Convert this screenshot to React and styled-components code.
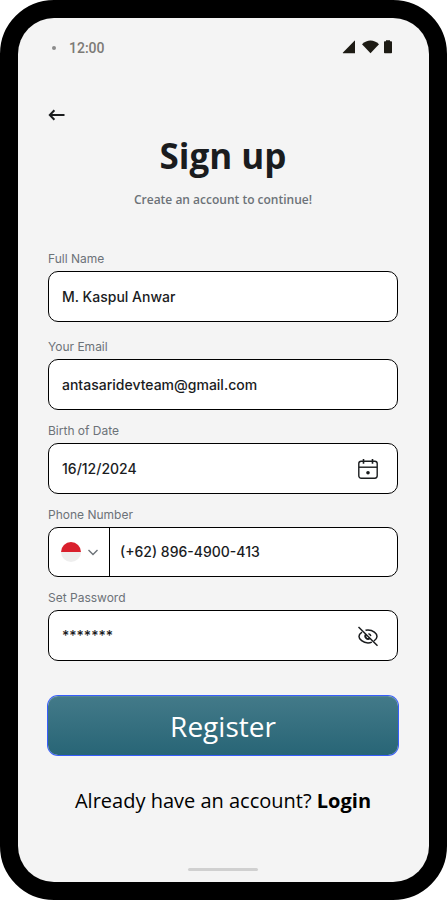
import React from "react";
import styled, { createGlobalStyle } from "styled-components";

const GlobalStyle = createGlobalStyle`
  *, *::before, *::after { box-sizing: border-box; }
  body {
    margin: 0;
    background: #fff;
    color: #1a1c1e;
    font-family: Inter, "Liberation Sans", sans-serif;
  }
  button, input, select { font: inherit; color: inherit; }
`;

const display = `"Open Sans", "Noto Sans", sans-serif`;

const Phone = styled.div`
  display: flex;
  flex-direction: column;
  min-height: 100vh;
  border: 18px solid #000;
  border-radius: 54px;
  background: #000;
`;

const Screen = styled.div`
  flex: 1;
  display: flex;
  flex-direction: column;
  padding: 0 31px 10px 30px;
  border-radius: 36px;
  background: #f4f4f4;
`;

const StatusBar = styled.header`
  display: flex;
  align-items: center;
  justify-content: space-between;
  height: 60px;
  padding: 0 6px 0 4px;
`;

const Clock = styled.div`
  display: flex;
  align-items: center;
  gap: 13px;
  color: #7c7a76;
  font: 500 14px/20px Roboto, sans-serif;

  &::before {
    content: "";
    width: 4px;
    height: 4px;
    border-radius: 50%;
    background: #8b8b8b;
  }
`;

const StatusIcons = styled.svg`
  display: block;
  margin-bottom: 3px;
`;

const Main = styled.main`
  display: flex;
  flex-direction: column;
  padding-top: 25px;
`;

const BackButton = styled.button`
  align-self: flex-start;
  display: flex;
  padding: 0;
  border: 0;
  background: none;
  cursor: pointer;
`;

const Title = styled.h1`
  margin: 5px 0 0;
  font: 700 35px/48px ${display};
  text-align: center;
`;

const Subtitle = styled.p`
  margin: 10px 0 0;
  color: #6c7278;
  font: 600 12px/20px ${display};
  text-align: center;
`;

const Form = styled.form`
  display: flex;
  flex-direction: column;
  gap: 11px;
  margin-top: 39px;
`;

const FieldGroup = styled.div`
  display: flex;
  flex-direction: column;
  gap: 2px;
  padding-bottom: ${(p) => (p.$spaced ? "4px" : "0")};
`;

const Label = styled.label`
  color: #6c7278;
  font-size: 12px;
  line-height: 20px;
`;

const Control = styled.div`
  display: flex;
  align-items: center;
  height: ${(p) => (p.$split ? "50px" : "51px")};
  padding: ${(p) => (p.$split ? "0" : "0 17px 0 13px")};
  border: 1px solid #000;
  border-radius: 10px;
  background: #fff;
`;

const TextInput = styled.input`
  flex: 1;
  min-width: 0;
  height: 100%;
  padding: 0 0 1px;
  border: 0;
  outline: 0;
  background: transparent;
  font-size: 14px;
  font-weight: 500;
`;

const IconButton = styled.button`
  display: flex;
  padding: 0;
  border: 0;
  background: none;
  cursor: pointer;
`;

const CountryPicker = styled.div`
  position: relative;
  display: flex;
  align-items: center;
  gap: 6px;
  width: 61px;
  height: 100%;
  margin-right: 10px;
  padding-left: 12px;
  border-right: 1px solid #000;
`;

const CountrySelect = styled.select`
  position: absolute;
  inset: 0;
  width: 100%;
  border: 0;
  opacity: 0;
  cursor: pointer;
`;

const Flag = styled.span`
  width: 20px;
  height: 20px;
  border-radius: 50%;
  background: linear-gradient(#d9202d 50%, #eee 50%);
`;

const RegisterButton = styled.button`
  height: 59px;
  margin: 24px 0 0;
  padding: 0;
  border: 0;
  border-radius: 10px;
  background: linear-gradient(#437a89, #286576);
  box-shadow: 0 0 0 1px #375dfb, inset 0 1px 1px rgba(255, 255, 255, 0.12);
  color: #fff;
  font: 500 28px/36px ${display};
  cursor: pointer;
`;

const LoginPrompt = styled.p`
  margin: 32px 0 0;
  color: #000;
  font: 400 20px/28px ${display};
  text-align: center;
  white-space: nowrap;
`;

const LoginLink = styled.a`
  color: inherit;
  font-weight: 700;
  text-decoration: none;
`;

const HomeBar = styled.div`
  width: 70px;
  height: 3px;
  margin: auto auto 1px;
  border-radius: 2px;
  background: #d0d0d0;
`;

function BackIcon() {
  return (
    <svg width="18" height="24" viewBox="0 0 18 24" fill="none" stroke="#1a1c1e" strokeWidth="2" aria-hidden="true">
      <path d="M16.5 12H2M6.4 7.2 1.8 12 6.4 16.8" />
    </svg>
  );
}

function CalendarIcon() {
  return (
    <svg width="24" height="24" viewBox="0 0 24 24" fill="none" stroke="#1a1c1e" strokeWidth="1.4" aria-hidden="true">
      <rect x="2.8" y="4.2" width="18.4" height="17" rx="2.4" />
      <path d="M3 10.2h18" />
      <path d="M7.5 2v4.8M16.5 2v4.8" strokeWidth="1.6" />
      <circle cx="12" cy="15.7" r="1.8" fill="#1a1c1e" stroke="none" />
    </svg>
  );
}

function HiddenEyeIcon() {
  return (
    <svg width="24" height="24" viewBox="0 0 24 24" fill="none" stroke="#1a1c1e" strokeWidth="1.5" aria-hidden="true">
      <path d="M2.5 3 21.5 21.7" />
      <path d="M9.5 6.3C10.3 6.1 11.1 6 12 6c5 0 9 3.6 9 6.4 0 1.4-1.2 3.2-3.1 4.6M6 8.1C4.1 9.4 3 11.1 3 12.4c0 2.8 4 6.5 9 6.5 1.4 0 2.7-.3 3.9-.8" />
      <path d="M10 10.5A2.7 2.7 0 0 0 13.8 14.3" strokeWidth="2" />
      <path d="M12.4 9.8a2.8 2.8 0 0 1 2.4 2.4" />
    </svg>
  );
}

function Field({ id, label, value, type = "text", spaced, icon }) {
  return (
    <FieldGroup $spaced={spaced}>
      <Label htmlFor={id}>{label}</Label>
      <Control>
        <TextInput id={id} type={type} defaultValue={value} />
        {icon}
      </Control>
    </FieldGroup>
  );
}

export default function App() {
  return (
    <>
      <GlobalStyle />
      <Phone>
        <Screen>
          <StatusBar>
            <Clock>12:00</Clock>
            <StatusIcons width="50" height="14" viewBox="0 0 50 14" fill="#1d1b14" aria-hidden="true">
              <path d="M13 .8v12.4H1.2Q.3 13.2 1 12.4L12 1.3Q13 .2 13 .8Z" />
              <path d="M20 4.2Q24 .5 28.5.5T37 4.2L28.5 13.2Z" />
              <path d="M44 1.2V.2h4v1h1.2q.8 0 .8.8v10.4q0 .8-.8.8h-6.4q-.8 0-.8-.8V2q0-.8.8-.8Z" />
            </StatusIcons>
          </StatusBar>

          <Main>
            <BackButton type="button" aria-label="Back">
              <BackIcon />
            </BackButton>
            <Title>Sign up</Title>
            <Subtitle>Create an account to continue!</Subtitle>

            <Form onSubmit={(event) => event.preventDefault()}>
              <Field id="name" label="Full Name" value="M. Kaspul Anwar" spaced />
              <Field id="email" label="Your Email" type="email" value="antasaridevteam@gmail.com" />
              <Field
                id="birth"
                label="Birth of Date"
                value="16/12/2024"
                icon={
                  <IconButton type="button" aria-label="Choose date">
                    <CalendarIcon />
                  </IconButton>
                }
              />
              <FieldGroup>
                <Label htmlFor="phone">Phone Number</Label>
                <Control $split>
                  <CountryPicker>
                    <Flag />
                    <svg width="12" height="12" viewBox="0 0 12 12" fill="none" stroke="#6c7278" strokeWidth="1.4" aria-hidden="true">
                      <path d="m1.5 4 4.5 4.5L10.5 4" />
                    </svg>
                    <CountrySelect aria-label="Country code" defaultValue="ID">
                      <option value="ID">+62</option>
                    </CountrySelect>
                  </CountryPicker>
                  <TextInput id="phone" type="tel" defaultValue="(+62) 896-4900-413" />
                </Control>
              </FieldGroup>
              <Field
                id="password"
                label="Set Password"
                value="*******"
                icon={
                  <IconButton type="button" aria-label="Show password">
                    <HiddenEyeIcon />
                  </IconButton>
                }
              />
              <RegisterButton type="submit">Register</RegisterButton>
            </Form>

            <LoginPrompt>
              Already have an account? <LoginLink href="#login">Login</LoginLink>
            </LoginPrompt>
          </Main>

          <HomeBar />
        </Screen>
      </Phone>
    </>
  );
}
